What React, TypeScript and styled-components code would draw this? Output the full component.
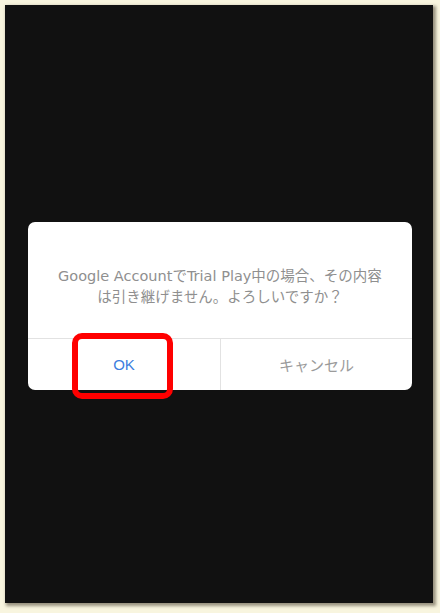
import React from "react";
import styled, { createGlobalStyle } from "styled-components";

const GlobalStyle = createGlobalStyle`
  html, body {
    margin: 0;
    padding: 0;
    background: #f8f5df;
  }
  body {
    width: 440px;
    height: 613px;
    overflow: hidden;
    font-family: "DejaVu Sans", "Noto Sans CJK JP", sans-serif;
  }
`;

const Frame = styled.div`
  padding: 5px;
`;

const Screen = styled.div`
  width: 428px;
  height: 598px;
  background: #111111;
  box-shadow: 2px 2px 3px 1px rgba(120, 112, 95, 0.75);
  padding: 217px 0 0 23px;
  box-sizing: border-box;
`;

const Dialog = styled.div`
  width: 384px;
  background: #ffffff;
  border-radius: 7px;
`;

const Message = styled.div`
  height: 117px;
  box-sizing: border-box;
  padding: 44px 10px 0;
  text-align: center;
  color: #8f8f8f;
  font-size: 14.5px;
  line-height: 21px;
  border-bottom: 1px solid #e2e2e2;
`;

const Buttons = styled.div`
  display: grid;
  grid-template-columns: 192px 1fr;
  height: 51px;
`;

const Button = styled.div<{ $primary?: boolean }>`
  position: relative;
  display: flex;
  align-items: center;
  justify-content: center;
  font-size: 15px;
  font-family: "Liberation Sans", "Noto Sans CJK JP", sans-serif;
  color: ${(p) => (p.$primary ? "#3d7ede" : "#9b9b9b")};
  border-left: ${(p) => (p.$primary ? "none" : "1px solid #e2e2e2")};
`;

const Highlight = styled.div`
  position: absolute;
  left: 44px;
  top: -6px;
  width: 101px;
  height: 66px;
  box-sizing: border-box;
  border: 6px solid #ff0000;
  border-radius: 10px;
  pointer-events: none;
`;

export default function App() {
  return (
    <>
      <GlobalStyle />
      <Frame>
        <Screen>
          <Dialog>
            <Message>
              Google AccountでTrial Play中の場合、その内容
              <br />
              は引き継げません。よろしいですか？
            </Message>
            <Buttons>
              <Button $primary>
                OK
                <Highlight />
              </Button>
              <Button>キャンセル</Button>
            </Buttons>
          </Dialog>
        </Screen>
      </Frame>
    </>
  );
}
